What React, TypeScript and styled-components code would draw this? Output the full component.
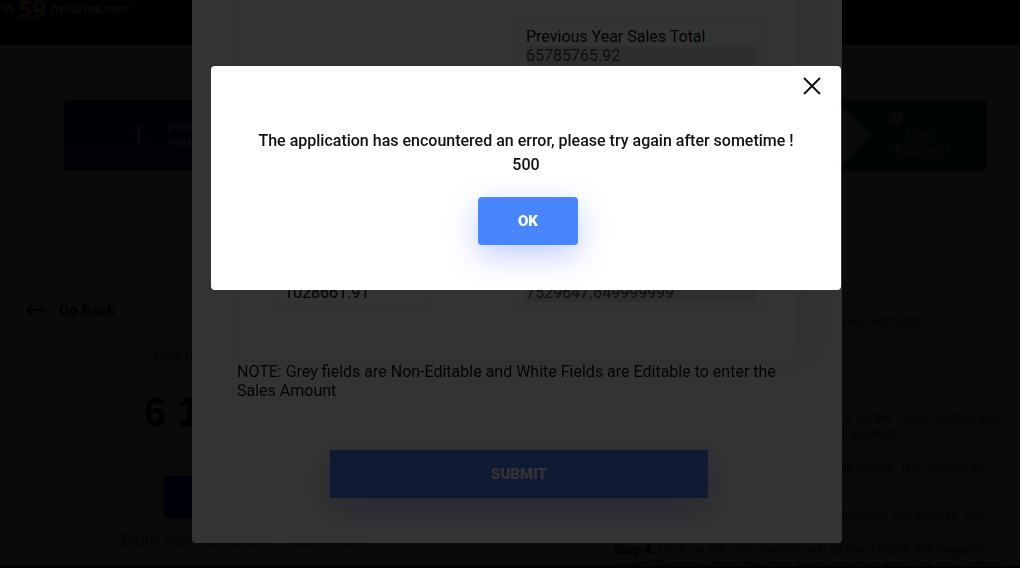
import React from 'react';
import styled, { createGlobalStyle } from 'styled-components';

const GlobalStyle = createGlobalStyle`
  *, *::before, *::after { box-sizing: border-box; }
  body {
    margin: 0;
    overflow: hidden;
    background: #fff;
    color: #000;
    font-family: Roboto, "Liberation Sans", sans-serif;
    font-size: 16px;
  }
  p, ol { margin: 0; padding: 0; }
  button, input { font-family: inherit; }
`;

/* ---------- page behind the dialogs ---------- */

const Page = styled.div`
  display: flex;
  flex-direction: column;
  height: 100vh;
  overflow: hidden;
`;

const Header = styled.header`
  flex: none;
  height: 45px;
  background: #000;
  color: #fff;
  font: 700 12px/18px "Open Sans", sans-serif;
  white-space: nowrap;
`;

const Brand = styled.p`
  display: flex;
  align-items: center;
  gap: 5px;
  height: 18px;
  padding-left: 2px;
  sup { font-size: 8px; line-height: 8px; }
`;

const BrandNumber = styled.span`
  color: #fc0;
  font-size: 24px;
  line-height: 18px;
`;

const Steps = styled.ol`
  flex: none;
  display: flex;
  justify-content: space-between;
  margin: 55px 33px 0 64px;
  height: 71px;
  list-style: none;
`;

const FirstStep = styled.li`
  display: flex;
  align-items: center;
  gap: 14px;
  width: 240px;
  padding-left: 66px;
  border-radius: 4px;
  background: linear-gradient(#00257d, #003a7d);
  color: #c8d7ff;
  font-size: 12px;
  font-weight: 900;
  line-height: 15px;
`;

const StepNumber = styled.span`
  font-size: 28px;
  font-weight: 400;
`;

const LastStep = styled.li`
  display: flex;
  width: 187px;
  border-radius: 4px;
  background: #00785a;
  color: #e1d2d2;
  font-size: 14px;
  font-weight: 700;
  line-height: 16px;
  text-align: center;
`;

const Arrow = styled.svg`
  width: 71px;
  height: 71px;
`;

const StepBody = styled.div`
  width: 100px;
  padding-top: 11px;
  svg { display: block; margin-left: 18px; }
`;

const Main = styled.main`
  flex: 1;
  min-height: 0;
  display: flex;
  justify-content: space-between;
  overflow: hidden;
`;

const OtpColumn = styled.form`
  width: 400px;
  padding: 130px 0 0 26px;
`;

const BackLink = styled.a`
  display: flex;
  align-items: center;
  gap: 14px;
  color: #000;
  font-size: 15px;
  font-weight: 700;
  line-height: 18px;
  text-decoration: none;
`;

const OtpLabel = styled.label`
  display: block;
  margin: 30px 0 0 128px;
  color: #000;
  font-size: 12px;
  line-height: 16px;
`;

const OtpInput = styled.input`
  display: block;
  width: 240px;
  height: 48px;
  margin: 23px 0 0 118px;
  padding: 0;
  border: 0;
  background: none;
  color: #000;
  font: 700 40px "Liberation Sans", sans-serif;
`;

const OtpButton = styled.button`
  display: block;
  width: 180px;
  height: 42px;
  margin: 40px 0 0 138px;
  border: 0;
  background: #0014e1;
`;

const Resend = styled.p`
  margin: 13px 0 0 95px;
  color: #4b4b4b;
  line-height: 19px;
`;

const Guide = styled.section`
  width: 406px;
  padding-top: 142px;
  color: #4b4b4b;
  font-size: 13px;
  line-height: 15px;
  white-space: nowrap;
`;

const GuideTitle = styled.p`
  width: 308px;
  text-align: right;
`;

const GuideSteps = styled.ol`
  margin-top: 82px;
  list-style: none;
`;

const GuideStep = styled.li`
  min-height: 49px;
  b { color: #000; }
  &:nth-child(3) { min-height: 34px; }
`;

const Footer = styled.footer`
  flex: none;
  height: 2px;
  background: #000;
`;

/* ---------- dialogs ---------- */

const Backdrop = styled.div<{ $top?: boolean }>`
  position: fixed;
  inset: 0;
  display: flex;
  justify-content: center;
  align-items: ${(p) => (p.$top ? 'flex-start' : 'flex-end')};
  padding: ${(p) => (p.$top ? '66px 0 0 32px' : '0 0 25px 14px')};
  background: rgba(0, 0, 0, 0.8);
  overflow: hidden;
`;

const SalesDialog = styled.form`
  flex: none;
  display: flex;
  flex-direction: column;
  justify-content: flex-end;
  width: 650px;
  min-height: 100vh;
  padding: 0 45px 45px;
  border-radius: 4px;
  background: #fff;
  color: #111;
`;

const SalesCard = styled.div`
  display: flex;
  flex-direction: column;
  flex: 1;
  justify-content: flex-end;
  gap: 200px;
  padding: 0 30px 50px 37px;
  border: 1px solid #e6e6e6;
  box-shadow: 20px 0 48px rgba(0, 0, 0, 0.06);
`;

const FieldRow = styled.div`
  display: flex;
  justify-content: space-between;
`;

const Field = styled.div<{ $wide?: boolean }>`
  width: ${(p) => (p.$wide ? 249 : 150)}px;
  margin-left: ${(p) => (p.$wide ? 'auto' : '0')};
  padding: 8px;
  border: 1px solid #e6e6e6;
  line-height: 19px;
`;

const FieldLabel = styled.label`
  display: block;
`;

const FieldInput = styled.input`
  display: block;
  width: 100%;
  height: 19px;
  padding: 0;
  border: 0;
  background: #fff;
  color: #000;
  font-size: 16px;
  &:read-only { background: #e6e6e6; color: #4b4b4b; }
`;

const Note = styled.p`
  line-height: 19px;
`;

const Actions = styled.div<{ $gap: number }>`
  display: flex;
  justify-content: center;
  margin-top: ${(p) => p.$gap}px;
  padding-left: 4px;
`;

const PrimaryButton = styled.button<{ $wide?: boolean }>`
  width: ${(p) => (p.$wide ? 378 : 100)}px;
  height: 48px;
  padding: 0;
  border: 0;
  border-radius: ${(p) => (p.$wide ? 0 : 4)}px;
  background: #4885ff;
  box-shadow: 0 10px 30px rgba(72, 110, 255, 0.35);
  color: #fff;
  font-size: 15px;
  font-weight: 900;
`;

const ErrorDialog = styled.div`
  flex: none;
  display: flex;
  flex-direction: column;
  width: 630px;
  height: 224px;
  padding: 8px 17px;
  border-radius: 4px;
  background: #fff;
`;

const CloseButton = styled.button`
  align-self: flex-end;
  width: 24px;
  height: 24px;
  padding: 0;
  border: 0;
  background: none;
  svg { display: block; }
`;

const Message = styled.p`
  margin-top: 31px;
  color: #111;
  font-weight: 500;
  line-height: 24px;
  text-align: center;
`;

export default function App() {
  return (
    <>
      <GlobalStyle />
      <Page>
        <Header>
          <Brand>
            <span>in</span>
            <BrandNumber>59</BrandNumber>
            <span>minutes.com<sup>™</sup></span>
          </Brand>
        </Header>
        <Steps>
          <FirstStep>
            <StepNumber>1.</StepNumber>
            <span>PROVIDE<br />YOUR DATA</span>
          </FirstStep>
          <LastStep>
            <Arrow viewBox="0 0 71 71" aria-hidden="true">
              <path d="M0 0H36L71 35.5L36 71H0Z" fill="#fff" />
            </Arrow>
            <StepBody>
              <svg width="14" height="14" viewBox="0 0 14 14" aria-hidden="true">
                <circle cx="7" cy="7" r="6.5" fill="#e1d2d2" />
                <path d="M4 7l2 2.500 4-4.500" fill="none" stroke="#00644b" strokeWidth="2" />
              </svg>
              Loan<br />Approval
            </StepBody>
          </LastStep>
        </Steps>
        <Main>
          <OtpColumn>
            <BackLink href="#back">
              <svg width="19" height="14" viewBox="0 0 19 14" fill="none" stroke="#000" strokeWidth="2" aria-hidden="true">
                <path d="M19 7H1M7 1L1 7l6 6" />
              </svg>
              Go Back
            </BackLink>
            <OtpLabel htmlFor="otp">Enter OTP</OtpLabel>
            <OtpInput id="otp" defaultValue="6 1" />
            <OtpButton type="button" aria-label="Verify" />
            <Resend>Didn't receive the OTP? Resend OTP</Resend>
          </OtpColumn>
          <Guide>
            <GuideTitle>Enable API access in your GST Account.</GuideTitle>
            <GuideSteps>
              <GuideStep>
                <b>Step 1.</b> Visit the GST portal and next click on the "Login" button and<br />
                enter the credentials to access your GST account.
              </GuideStep>
              <GuideStep><b>Step 2.</b> After your login, click on the "View Profile" link located on</GuideStep>
              <GuideStep><b>Step 3.</b> Under Quick Links, click on the "Manage API Access" link</GuideStep>
              <GuideStep>
                <b>Step 4.</b> Click on the "Yes" button next to the "Enable API Request",<br />
                select "Duration" from the drop down provided and click on "Confirm"
              </GuideStep>
            </GuideSteps>
          </Guide>
        </Main>
        <Footer />
      </Page>

      <Backdrop>
        <SalesDialog>
          <SalesCard>
            <FieldRow>
              <Field $wide>
                <FieldLabel htmlFor="previous-total">Previous Year Sales Total</FieldLabel>
                <FieldInput id="previous-total" readOnly value="65785765.92" />
              </Field>
            </FieldRow>
            <FieldRow>
              <Field>
                <FieldInput aria-label="Sales amount" defaultValue="1028661.91" />
              </Field>
              <Field $wide>
                <FieldInput aria-label="Sales total" readOnly value="7529647.649999999" />
              </Field>
            </FieldRow>
          </SalesCard>
          <Note>NOTE: Grey fields are Non-Editable and White Fields are Editable to enter the Sales Amount</Note>
          <Actions $gap={50}>
            <PrimaryButton type="submit" $wide>SUBMIT</PrimaryButton>
          </Actions>
        </SalesDialog>
      </Backdrop>

      <Backdrop $top>
        <ErrorDialog role="alertdialog" aria-modal="true" aria-describedby="error-message">
          <CloseButton type="button" aria-label="Close">
            <svg width="24" height="24" viewBox="0 0 24 24" stroke="#111" strokeWidth="2" aria-hidden="true">
              <path d="M4 4l16 16M20 4L4 20" />
            </svg>
          </CloseButton>
          <Message id="error-message">
            The application has encountered an error, please try again after sometime !<br />500
          </Message>
          <Actions $gap={20}>
            <PrimaryButton type="button">OK</PrimaryButton>
          </Actions>
        </ErrorDialog>
      </Backdrop>
    </>
  );
}
